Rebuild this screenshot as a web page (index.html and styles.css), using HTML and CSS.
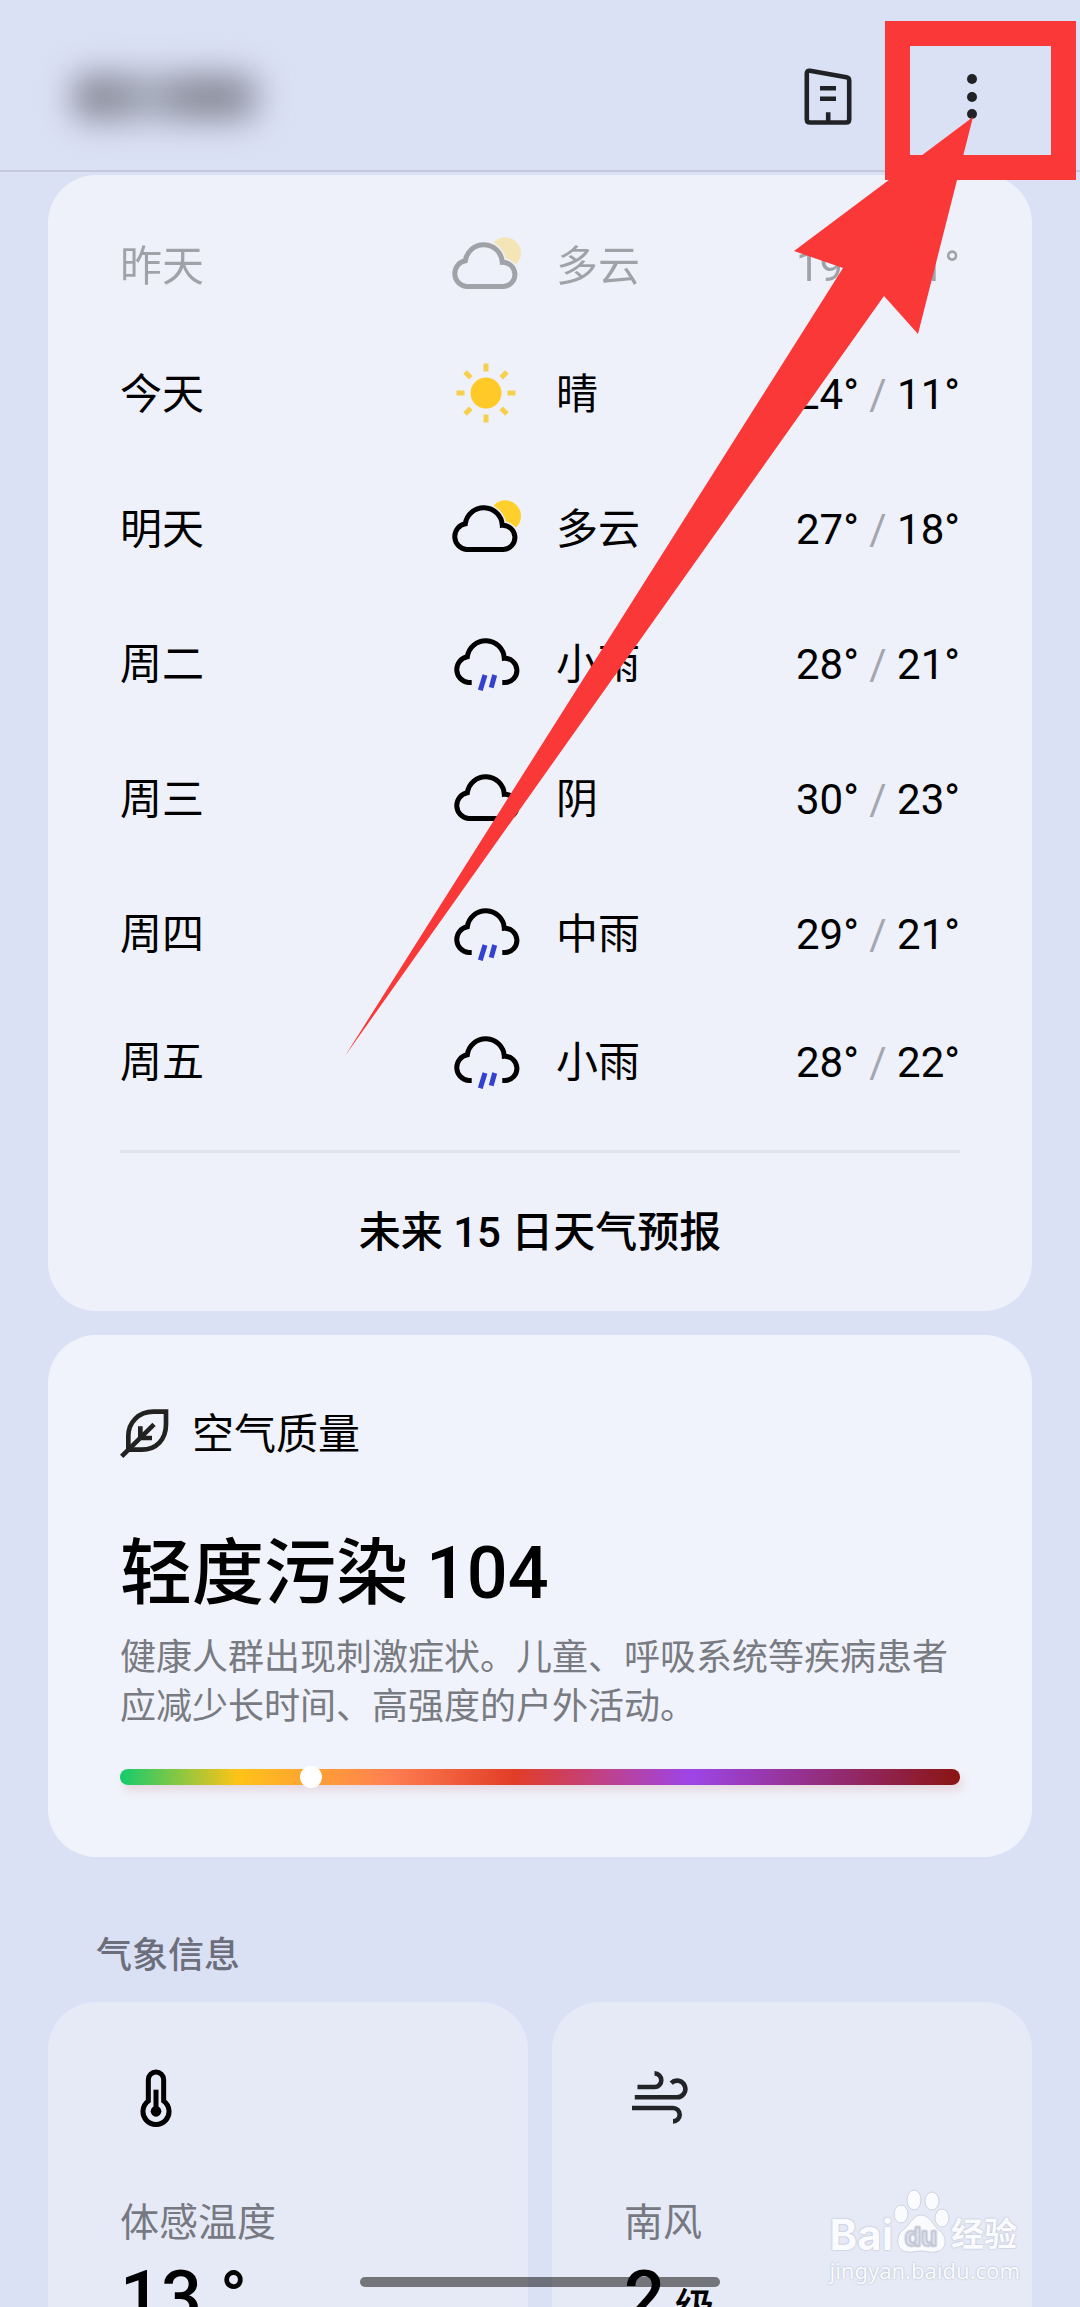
FILE: index.html
```html
<!DOCTYPE html>
<html lang="zh-CN">
<head>
	<meta charset="utf-8">
	<title>天气</title>
	<meta name="viewport" content="width=device-width, initial-scale=1">
	<link rel="stylesheet" href="styles.css">
</head>
<body>
	<!-- shared weather icons -->
	<svg class="sprite" aria-hidden="true">
		<symbol id="cloud" viewBox="0 0 72 72">
			<path d="M17.5 55.5A13 13 0 0 1 16.3 29.8A18.6 18.6 0 0 1 53.3 31.3A12.1 12.1 0 0 1 54.3 55.5Z" transform="translate(1 -1)" fill="none" stroke="#000" stroke-width="5"/>
		</symbol>
		<symbol id="cloudy" viewBox="0 0 72 72">
			<circle cx="55.3" cy="22" r="15.7" fill="#ffcf2b"/>
			<path d="M17.5 55.5A13 13 0 0 1 16.3 29.8A18.6 18.6 0 0 1 53.3 31.3A12.1 12.1 0 0 1 54.3 55.5Z" transform="translate(-1 0)" fill="#eef1fa" stroke="#eef1fa" stroke-width="8"/>
			<path d="M17.5 55.5A13 13 0 0 1 16.3 29.8A18.6 18.6 0 0 1 53.3 31.3A12.1 12.1 0 0 1 54.3 55.5Z" transform="translate(-1 0)" fill="none" stroke="#000" stroke-width="5"/>
		</symbol>
		<symbol id="rain" viewBox="0 0 72 72">
			<path d="M20.7 55.5H17.5A13 13 0 0 1 16.3 29.8A18.6 18.6 0 0 1 53.3 31.3A12.1 12.1 0 0 1 54.3 55.5H51.3" transform="translate(1 -2)" fill="none" stroke="#000" stroke-width="5"/>
			<path d="M35 46L30.3 61.3M44.7 46L41.2 58.7" fill="none" stroke="#3341cf" stroke-width="5"/>
		</symbol>
		<symbol id="sunny" viewBox="0 0 72 72">
			<circle cx="36" cy="34" r="15.5" fill="#ffc928"/>
			<path d="M36 4.5v8M36 55.5v8M6.5 34h8M57.5 34h8M15.1 13.1l5.7 5.7M51.2 49.2l5.7 5.7M56.9 13.1l-5.7 5.7M20.8 49.2l-5.7 5.7" stroke="#f6d04b" stroke-width="5"/>
		</symbol>
	</svg>

	<header class="top-bar">
		<h1 class="city" aria-label="城市"></h1>
		<button class="icon-btn" aria-label="城市管理">
			<svg width="48" height="58" viewBox="0 0 48 58" fill="none" stroke="#202226" stroke-width="4.6">
				<path d="M6 2.8L42.5 9.3Q45.2 9.8 45.2 12.5V51.3Q45.2 54.5 42 54.5H6Q2.8 54.5 2.8 51.3V5.5Q2.8 2.3 6 2.8Z"/>
				<path d="M16 20.3H32M16 30.7H32M24.2 44.3V54"/>
			</svg>
		</button>
		<button class="icon-btn more-btn" aria-label="更多">
			<svg width="12" height="48" viewBox="0 0 12 48" fill="#202226">
				<circle cx="6" cy="6" r="5"/>
				<circle cx="6" cy="24" r="5"/>
				<circle cx="6" cy="41" r="5"/>
			</svg>
		</button>
	</header>

	<main class="content">
		<section class="card forecast">
			<table class="days">
				<tr class="past">
					<td class="day">昨天</td>
					<td class="icon"><svg class="weather"><use href="#cloudy"/></svg></td>
					<td>多云</td>
					<td class="temp">19° <i>/</i> 11°</td>
				</tr>
				<tr>
					<td class="day">今天</td>
					<td class="icon"><svg class="weather"><use href="#sunny"/></svg></td>
					<td>晴</td>
					<td class="temp">24° <i>/</i> 11°</td>
				</tr>
				<tr>
					<td class="day">明天</td>
					<td class="icon"><svg class="weather"><use href="#cloudy"/></svg></td>
					<td>多云</td>
					<td class="temp">27° <i>/</i> 18°</td>
				</tr>
				<tr>
					<td class="day">周二</td>
					<td class="icon"><svg class="weather"><use href="#rain"/></svg></td>
					<td>小雨</td>
					<td class="temp">28° <i>/</i> 21°</td>
				</tr>
				<tr>
					<td class="day">周三</td>
					<td class="icon"><svg class="weather"><use href="#cloud"/></svg></td>
					<td>阴</td>
					<td class="temp">30° <i>/</i> 23°</td>
				</tr>
				<tr>
					<td class="day">周四</td>
					<td class="icon"><svg class="weather"><use href="#rain"/></svg></td>
					<td>中雨</td>
					<td class="temp">29° <i>/</i> 21°</td>
				</tr>
				<tr>
					<td class="day">周五</td>
					<td class="icon"><svg class="weather"><use href="#rain"/></svg></td>
					<td>小雨</td>
					<td class="temp">28° <i>/</i> 22°</td>
				</tr>
			</table>
			<button class="forecast-btn">未来 15 日天气预报</button>
		</section>

		<section class="card air">
			<h2 class="air-title">
				<svg width="50" height="54" viewBox="90 76 150 162" fill="none" stroke="#222" stroke-width="14">
					<path d="M228 87H190C145 87 115 120 115 160V201H155C200 201 228 170 228 125Z"/>
					<path d="M95 221L192 125M151 131V168M186 166H148"/>
				</svg>
				空气质量
			</h2>
			<p class="air-level">轻度污染 104</p>
			<p class="air-text">健康人群出现刺激症状。儿童、呼吸系统等疾病患者应减少长时间、高强度的户外活动。</p>
			<div class="air-bar"><span class="air-dot" style="left: 22.7%"></span></div>
		</section>

		<h2 class="section-title">气象信息</h2>
		<div class="metrics">
			<section class="card metric">
				<div class="metric-icon">
					<svg width="32" height="58" viewBox="300 504 96 174" fill="none" stroke="#000" stroke-width="15">
						<path d="M325 600V536a23 23 0 0 1 46 0V600A39 39 0 1 1 325 600Z"/>
						<path d="M348 566V631"/>
						<circle cx="348" cy="631" r="16" fill="#000" stroke="none"/>
					</svg>
				</div>
				<p class="metric-name">体感温度</p>
				<p class="metric-value">13 °</p>
			</section>
			<section class="card metric">
				<div class="metric-icon">
					<svg width="56" height="54" viewBox="0 0 56 54" fill="none" stroke="#222428" stroke-width="4.6">
						<path d="M5.5 16H22.5a6.8 6.8 0 0 0 0-13.6"/>
						<path d="M2.8 26.3H45a8.3 8.3 0 1 0-5.8-14.2"/>
						<path d="M0 37H41a6.6 6.6 0 0 1 0 13.4"/>
					</svg>
				</div>
				<p class="metric-name">南风</p>
				<p class="metric-value">2<small> 级</small></p>
			</section>
		</div>
	</main>

	<div class="home-bar"></div>

	<div class="watermark">
		<div class="brand">
			<span class="brand-latin">Bai</span>
			<svg width="58" height="66" viewBox="0 0 58 66" fill="#fafbfe" stroke="#cfd3df" stroke-width="1">
				<ellipse cx="8" cy="25" rx="7" ry="9"/>
				<ellipse cx="21" cy="11" rx="7" ry="10"/>
				<ellipse cx="39" cy="12" rx="7" ry="9"/>
				<ellipse cx="49" cy="29" rx="7" ry="9"/>
				<path d="M28 26C20 26 17 36 10 41C2 47 3 62 14 63C19 64 23 62 28 62C33 62 37 64 42 63C54 62 55 48 47 42C40 37 37 26 28 26Z"/>
				<text class="brand-du" x="28" y="57" text-anchor="middle">du</text>
			</svg>
			<span class="brand-cn">经验</span>
		</div>
		<div class="site">jingyan.baidu.com</div>
	</div>

	<!-- red marker pointing at the menu -->
	<svg class="marker" width="740" height="1060" viewBox="340 0 740 1060" aria-hidden="true">
		<rect x="897.5" y="33.5" width="166" height="134" fill="none" stroke="#fb3838" stroke-width="25"/>
		<path d="M973 117L794 251L843 268L345 1056L884 296L918 334Z" fill="#fb3838"/>
	</svg>
</body>
</html>
```
FILE: styles.css
```css
* {
	box-sizing: border-box;
}
body {
	margin: 0;
	height: 100vh;
	overflow: hidden;
	position: relative;
	font-family: Roboto, "Noto Sans CJK SC", sans-serif;
	background-color: #dbe1f5;
	color: #000;
}
h1, h2, p {
	margin: 0;
	font-weight: 400;
}
button {
	padding: 0;
	border: none;
	background: none;
	font-family: inherit;
	color: inherit;
	cursor: pointer;
}
.sprite {
	display: none;
}
.top-bar {
	display: flex;
	align-items: center;
	height: 172px;
	padding: 24px 72px 0 72px;
	border-bottom: 2px solid #c3c8dc;
}
.city {
	width: 188px;
	height: 48px;
	margin-right: auto;
	border-radius: 16px;
	background: linear-gradient(90deg, #8b8f9d 0%, #8b8f9d 20%, #a9afbe 42%, #8b8f9d 62%, #8b8f9d 85%, #a3a8b8 100%);
	filter: blur(16px);
}
.icon-btn {
	display: flex;
	align-items: center;
	justify-content: center;
	width: 72px;
	height: 72px;
}
.more-btn {
	margin-left: 72px;
}
.content {
	padding: 3px 48px 0;
}
.card {
	border-radius: 48px;
	padding: 0 72px;
}
.forecast {
	padding-top: 31px;
	background-color: #eef1fa;
}
.days {
	width: 100%;
	border-collapse: collapse;
	font-size: 42px;
	line-height: 60px;
}
.days td {
	height: 135px;
	padding: 0;
}
.days tr:first-child td,
.days tr:last-child td {
	height: 121px;
}
.days .day {
	width: 330px;
}
.days .icon {
	width: 106px;
}
.weather {
	display: block;
	width: 72px;
	height: 72px;
}
.temp {
	text-align: right;
}
.temp i {
	font-style: normal;
	color: #a3a6ae;
}
.past td {
	opacity: 0.32;
}
.forecast-btn {
	display: block;
	width: 100%;
	height: 161px;
	margin-top: 27px;
	padding-bottom: 8px;
	border-top: 3px solid #e0e3ec;
	font-size: 42px;
	font-weight: 500;
}
.air {
	margin-top: 24px;
	padding-top: 68px;
	padding-bottom: 72px;
	background-color: #f0f3fb;
}
.air-title {
	display: flex;
	align-items: center;
	gap: 22px;
	font-size: 42px;
	line-height: 64px;
}
.air-level {
	margin-top: 55px;
	font-size: 72px;
	font-weight: 500;
	line-height: 104px;
}
.air-text {
	margin-top: 8px;
	font-size: 36px;
	line-height: 49px;
	color: #797b82;
}
.air-bar {
	position: relative;
	height: 16px;
	margin-top: 37px;
	border-radius: 8px;
	background: linear-gradient(90deg, #14cb6d 0%, #fec317 14%, #ff7f51 32%, #e23d27 47%, #9d45e8 68%, #8b1512 100%);
	box-shadow: 3px 6px 8px rgba(200, 120, 130, 0.2);
}
.air-dot {
	position: absolute;
	top: -3px;
	width: 22px;
	height: 22px;
	margin-left: -11px;
	border-radius: 50%;
	background-color: #fff;
}
.section-title {
	padding: 73px 48px 20px;
	font-size: 36px;
	font-weight: 500;
	line-height: 52px;
	color: #6c6f7b;
}
.metrics {
	display: grid;
	grid-template-columns: 1fr 1fr;
	gap: 24px;
}
.metric {
	height: 480px;
	padding-top: 60px;
	background-color: #e6eaf7;
}
.metric-icon {
	display: flex;
	align-items: center;
	justify-content: center;
	width: 72px;
	height: 72px;
}
.metric-name {
	margin-top: 65px;
	font-size: 39px;
	line-height: 48px;
	color: #777982;
}
.metric-value {
	margin-top: 9px;
	font-size: 72px;
	font-weight: 500;
	line-height: 84px;
}
.metric-value small {
	font-size: 40px;
}
.home-bar {
	position: absolute;
	left: 50%;
	bottom: 20px;
	width: 360px;
	height: 10px;
	margin-left: -180px;
	border-radius: 5px;
	background-color: rgba(0, 0, 0, 0.5);
}
.watermark {
	position: absolute;
	right: 60px;
	bottom: 22px;
	color: #fafbfe;
	text-shadow: 0 0 2px #a4a9b8;
}
.brand {
	display: flex;
	align-items: flex-end;
	height: 66px;
	font-weight: 700;
}
.brand-latin {
	font-family: Inter, sans-serif;
	font-size: 42px;
	line-height: 40px;
}
.brand-cn {
	font-size: 33px;
	line-height: 40px;
}
.brand-du {
	font-family: Inter, sans-serif;
	font-size: 26px;
	fill: #e6eaf7;
	stroke: #c6cad8;
}
.site {
	font-family: "Noto Sans", sans-serif;
	font-size: 22px;
	line-height: 30px;
}
.marker {
	position: absolute;
	top: 0;
	right: 0;
	pointer-events: none;
}
```
